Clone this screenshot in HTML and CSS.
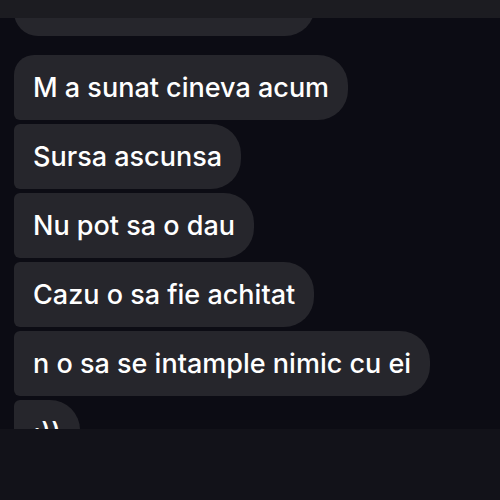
FILE: index.html
```html
<!DOCTYPE html>
<html>
<head>
<meta charset="utf-8">
<link rel="stylesheet" href="styles.css">
</head>
<body>
<div class="screen">
  <div class="topbar"></div>
  <div class="chat">
    <div class="list">
      <div class="bubble last"></div>
      <div class="bubble first">M a sunat cineva acum</div>
      <div class="bubble">Sursa ascunsa</div>
      <div class="bubble">Nu pot sa o dau</div>
      <div class="bubble">Cazu o sa fie achitat</div>
      <div class="bubble">n o sa se intample nimic cu ei</div>
      <div class="bubble">:))</div>
    </div>
  </div>
  <div class="bottombar"></div>
</div>
</body>
</html>
```
FILE: styles.css
```css
html, body {
  margin: 0;
  padding: 0;
  background: #0c0c14;
}
.screen {
  width: 500px;
  height: 500px;
  display: flex;
  flex-direction: column;
  overflow: hidden;
  background: #0c0c14;
  font-family: Inter, "Liberation Sans", sans-serif;
}
.topbar {
  height: 18px;
  flex: none;
  background: #1c1c21;
}
.chat {
  flex: 1;
  overflow: hidden;
  padding-left: 14px;
}
.list {
  display: flex;
  flex-direction: column;
  align-items: flex-start;
  gap: 4px;
  margin-top: -47px;
}
.bubble {
  height: 65px;
  box-sizing: border-box;
  display: flex;
  align-items: center;
  padding: 0 19px 0 19px;
  background: #26262c;
  color: #ffffff;
  font-size: 27px;
  font-weight: 500;
  border-radius: 6px 30px 30px 6px;
}
.bubble.last {
  border-bottom-left-radius: 24px;
  width: 301px;
  margin-bottom: 15px;
}
.bubble.first {
  border-top-left-radius: 20px;
}
.bottombar {
  height: 71px;
  flex: none;
  background: #121219;
}
```
